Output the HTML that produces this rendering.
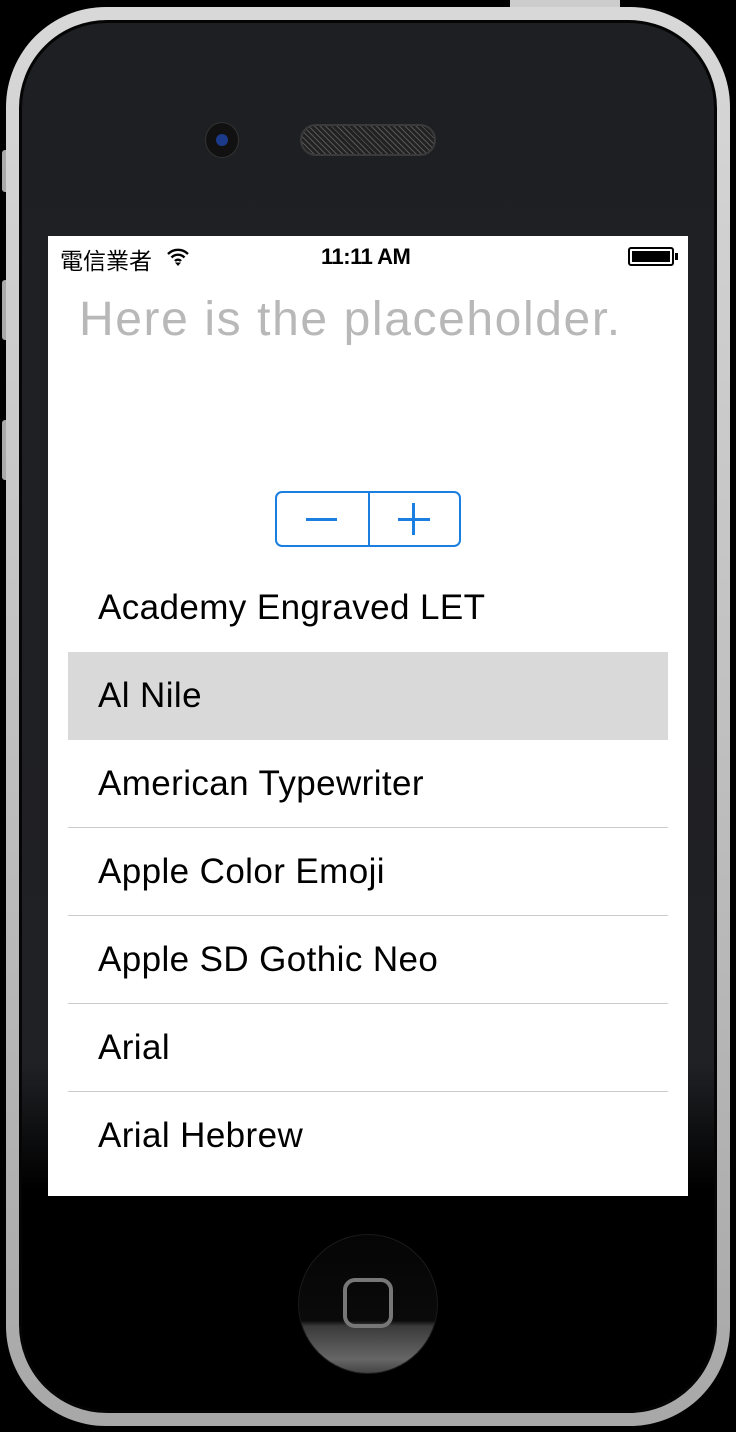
<!DOCTYPE html>
<html><head><meta charset="utf-8"><style>
*{margin:0;padding:0;box-sizing:border-box}
body{width:736px;height:1432px;background:#000;position:relative;overflow:hidden;font-family:"Liberation Sans",sans-serif}
.phone{position:absolute;left:6px;top:7px;width:724px;height:1419px;border-radius:100px;background:linear-gradient(#d8d8d8,#a8a8a8);}
.inner{position:absolute;left:13px;top:13px;right:13px;bottom:13px;border-radius:88px;background:linear-gradient(180deg,#1e1f23 0%,#202125 75%,#000 84%,#000 100%);border:3px solid #050505;overflow:hidden}
.screen{position:absolute;left:48px;top:236px;width:640px;height:960px;background:#fff}
.abs{position:absolute}
.row{position:absolute;left:20px;width:600px;height:88px;font-size:35px;letter-spacing:0.4px;color:#000;padding-left:30px;line-height:88px}
.sep{position:absolute;left:20px;width:600px;height:1px;background:#ccc}
</style></head><body>
<div class="abs" style="left:2px;top:150px;width:8px;height:42px;background:#aaa;border-radius:3px"></div>
<div class="abs" style="left:2px;top:280px;width:8px;height:60px;background:#aaa;border-radius:3px"></div>
<div class="abs" style="left:2px;top:420px;width:8px;height:60px;background:#aaa;border-radius:3px"></div>
<div class="abs" style="left:510px;top:0;width:110px;height:8px;background:#ccc"></div>
<div class="phone"><div class="inner"><div style="position:absolute;left:0;right:0;top:1177px;bottom:0;background:#000"></div></div></div>
<div class="abs" style="left:205px;top:122px;width:34px;height:36px;border-radius:50%;background:#111;border:1px solid #333"></div>
<div class="abs" style="left:216px;top:134px;width:12px;height:12px;border-radius:50%;background:#1c3a8a"></div>
<div class="abs" style="left:300px;top:124px;width:136px;height:32px;border-radius:16px;background:repeating-linear-gradient(45deg,#555 0 1px,#222 1px 4px),#333;border:2px solid #3a3a3a"></div>
<div class="screen">
 <div class="abs" style="left:12px;top:6px;font-size:23px;font-family:'Liberation Sans','Noto Sans CJK TC',sans-serif">電信業者</div>
 <svg class="abs" style="left:118px;top:11px" width="24" height="20" viewBox="0 0 24 20"><path d="M2 7a14 14 0 0 1 20 0M5.5 10.5a9 9 0 0 1 13 0M9 14a4 4 0 0 1 6 0" stroke="#000" stroke-width="2.4" fill="none"/><path d="M12 19l-3-3.5h6z" fill="#000"/></svg>
 <div class="abs" style="left:273px;top:8px;font-size:22px;font-weight:bold;letter-spacing:-0.5px">11:11 AM</div>
 <div class="abs" style="left:580px;top:11px;width:46px;height:19px;border:2px solid #000;border-radius:3px;padding:2px"><div style="width:100%;height:100%;background:#000"></div></div>
 <div class="abs" style="left:627px;top:17px;width:3px;height:7px;background:#000"></div>
 <div class="abs" style="left:31px;top:56px;font-size:48px;color:#b8b8b8;letter-spacing:1.6px">Here is the placeholder.</div>
 <div class="abs" style="left:227px;top:255px;width:186px;height:56px;border:2px solid #1a7fe0;border-radius:7px"></div>
 <div class="abs" style="left:320px;top:255px;width:2px;height:56px;background:#1a7fe0"></div>
 <div class="abs" style="left:258px;top:282px;width:31px;height:3px;background:#1a7fe0"></div>
 <div class="abs" style="left:350px;top:282px;width:32px;height:3px;background:#1a7fe0"></div>
 <div class="abs" style="left:364px;top:267px;width:3px;height:32px;background:#1a7fe0"></div>
 <div class="row" style="top:328px">Academy Engraved LET</div>
 <div class="row" style="top:416px;background:#d9d9d9">Al Nile</div>
 <div class="row" style="top:504px">American Typewriter</div>
 <div class="sep" style="top:591px"></div>
 <div class="row" style="top:592px">Apple Color Emoji</div>
 <div class="sep" style="top:679px"></div>
 <div class="row" style="top:680px">Apple SD Gothic Neo</div>
 <div class="sep" style="top:767px"></div>
 <div class="row" style="top:768px">Arial</div>
 <div class="sep" style="top:855px"></div>
 <div class="row" style="top:856px">Arial Hebrew</div>
</div>
<div class="abs" style="left:298px;top:1234px;width:140px;height:140px;border-radius:50%;background:linear-gradient(#050505 0%,#0a0a0a 62%,#3a3a3a 66%,#666 90%,#444 100%);border:1px solid #1a1a1a"></div>
<div class="abs" style="left:343px;top:1278px;width:50px;height:50px;border:4px solid #777;border-radius:12px"></div>
</body></html>
